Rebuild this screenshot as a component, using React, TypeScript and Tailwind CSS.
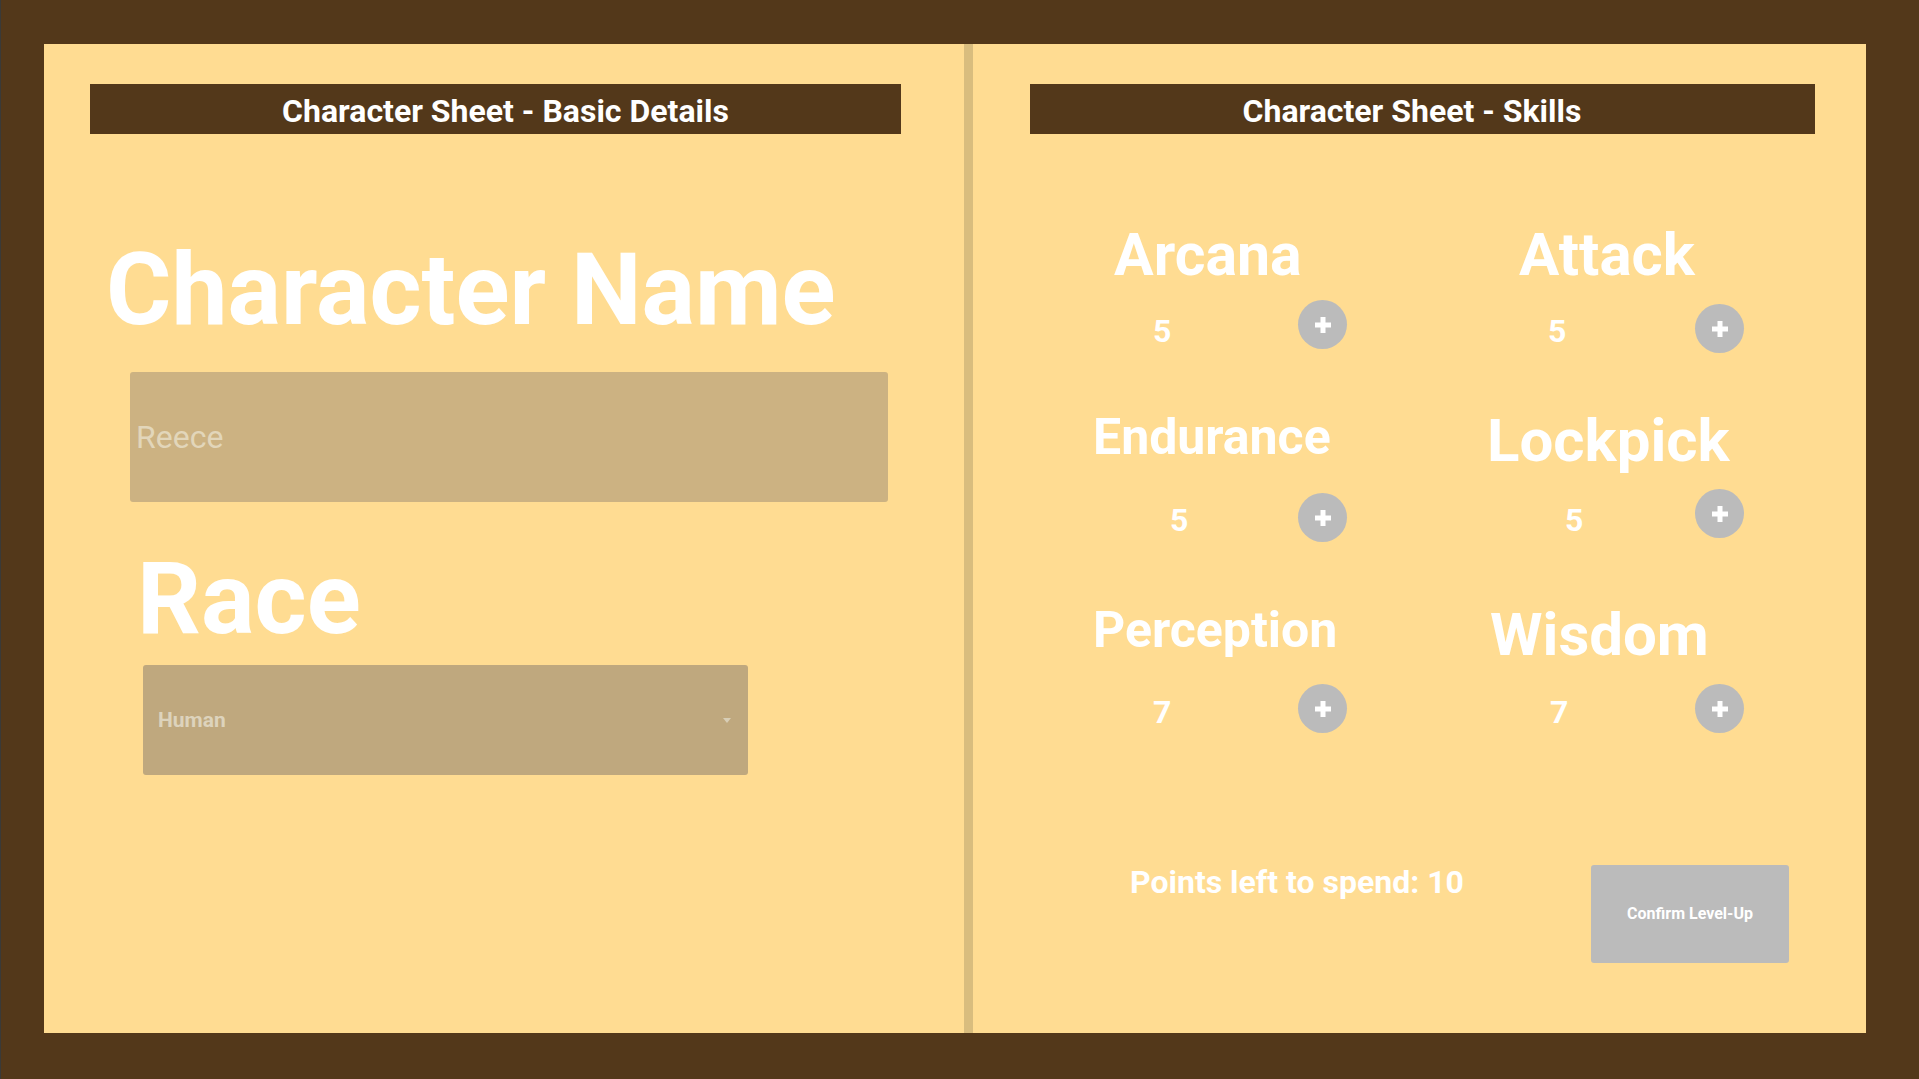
import React from "react";

type Skill = {
  name: string;
  value: number;
  labelCls: string;
  numCls: string;
  boxCls: string;
  btnCls: string;
};

const rows: Skill[][] = [
  [
    {
      name: "Arcana",
      value: 5,
      labelCls: "ml-[22px] mt-[5px] text-[59px]",
      boxCls: "w-[206px]",
      numCls: "ml-[61px] mt-[25px]",
      btnCls: "mt-[10px]",
    },
    {
      name: "Attack",
      value: 5,
      labelCls: "ml-[33px] mt-[5px] text-[60px]",
      boxCls: "w-[209px]",
      numCls: "ml-[62px] mt-[25px]",
      btnCls: "mt-[14px]",
    },
  ],
  [
    {
      name: "Endurance",
      value: 5,
      labelCls: "ml-[1px] mt-[2px] text-[50px]",
      boxCls: "w-[206px]",
      numCls: "ml-[78px] mt-[24px]",
      btnCls: "mt-[13px]",
    },
    {
      name: "Lockpick",
      value: 5,
      labelCls: "ml-[1px] mt-[1px] text-[60px]",
      boxCls: "w-[209px]",
      numCls: "ml-[79px] mt-[24px]",
      btnCls: "mt-[9px]",
    },
  ],
  [
    {
      name: "Perception",
      value: 7,
      labelCls: "ml-[1px] mt-[5px] text-[50px]",
      boxCls: "w-[206px]",
      numCls: "ml-[61px] mt-[26px]",
      btnCls: "mt-[14px]",
    },
    {
      name: "Wisdom",
      value: 7,
      labelCls: "ml-[4px] mt-[5px] text-[60px]",
      boxCls: "w-[209px]",
      numCls: "ml-[64px] mt-[26px]",
      btnCls: "mt-[14px]",
    },
  ],
];

function PlusButton({ cls }: { cls: string }) {
  return (
    <button
      type="button"
      className={`${cls} flex h-[49px] w-[49px] shrink-0 items-center justify-center rounded-full bg-[#bbbbbb]`}
    >
      <svg width="16" height="16" viewBox="0 0 16 16">
        <rect x="0" y="5.5" width="16" height="5" fill="#ffffff" />
        <rect x="5.5" y="0" width="5" height="16" fill="#ffffff" />
      </svg>
    </button>
  );
}

function SkillCell({ s }: { s: Skill }) {
  return (
    <div className="flex h-[190px] flex-col">
      <div className="h-[70px]">
        <div
          className={`${s.labelCls} whitespace-nowrap font-bold leading-none text-white`}
        >
          {s.name}
        </div>
      </div>
      <div className="flex items-start">
        <div className={`${s.boxCls} shrink-0`}>
          <div
            className={`${s.numCls} text-[32px] font-bold leading-none text-white`}
          >
            {s.value}
          </div>
        </div>
        <PlusButton cls={s.btnCls} />
      </div>
    </div>
  );
}

export default function App() {
  return (
    <div className="h-[1079px] w-[1919px] overflow-hidden border-l border-[#3a3a38] bg-[#53381a] pb-[46px] pl-[43px] pr-[53px] pt-[44px] font-['Roboto','Liberation_Sans',sans-serif]">
      <div className="flex h-full bg-[#ffdc92]">
        {/* Left page */}
        <section className="flex w-[920px] shrink-0 flex-col">
          <div className="ml-[46px] mt-[40px] h-[50px] w-[811px] bg-[#53381a]">
            <div className="pl-[20px] pt-[11px] text-center text-[32px] font-bold leading-none text-white">
              Character Sheet - Basic Details
            </div>
          </div>

          <div className="ml-[62px] mt-[106px] whitespace-nowrap text-[100px] font-bold leading-none text-white">
            Character Name
          </div>

          <div className="ml-[86px] mt-[32px] flex h-[130px] w-[758px] items-center rounded-[3px] bg-[#ccb282] pl-[6px]">
            <span className="text-[32px] font-normal leading-none text-[#e2d6ba]">
              Reece
            </span>
          </div>

          <div className="ml-[93px] mt-[47px] text-[100px] font-bold leading-none text-white">
            Race
          </div>

          <div className="ml-[99px] mt-[16px] flex h-[110px] w-[605px] items-center justify-between rounded-[3px] bg-[#bfa87e] pl-[15px] pr-[17px]">
            <span className="text-[21px] font-bold leading-none text-[#ddd3bc]">
              Human
            </span>
            <svg width="8" height="5" viewBox="0 0 8 5">
              <polygon points="0,0 8,0 4,5" fill="#d8ceb6" />
            </svg>
          </div>
        </section>

        {/* Divider */}
        <div className="w-[9px] shrink-0 bg-[#d9bd7e]" />

        {/* Right page */}
        <section className="flex min-w-0 flex-1 flex-col">
          <div className="ml-[57px] mt-[40px] h-[50px] w-[785px] bg-[#53381a]">
            <div className="pr-[21px] pt-[11px] text-center text-[32px] font-bold leading-none text-white">
              Character Sheet - Skills
            </div>
          </div>

          <div className="ml-[119px] mt-[86px] grid grid-cols-[394px_300px]">
            {rows.map((row, i) => (
              <React.Fragment key={i}>
                {row.map((s) => (
                  <SkillCell key={s.name} s={s} />
                ))}
              </React.Fragment>
            ))}
          </div>

          <div className="mt-[75px] flex items-start">
            <div className="ml-[157px] mt-[1px] whitespace-nowrap text-[32px] font-bold leading-none text-white">
              Points left to spend: 10
            </div>
            <button
              type="button"
              className="ml-auto mr-[77px] flex h-[98px] w-[198px] items-center justify-center rounded-[3px] bg-[#bbbbbb] text-[16px] font-bold leading-none text-white"
            >
              Confirm Level-Up
            </button>
          </div>
        </section>
      </div>
    </div>
  );
}
